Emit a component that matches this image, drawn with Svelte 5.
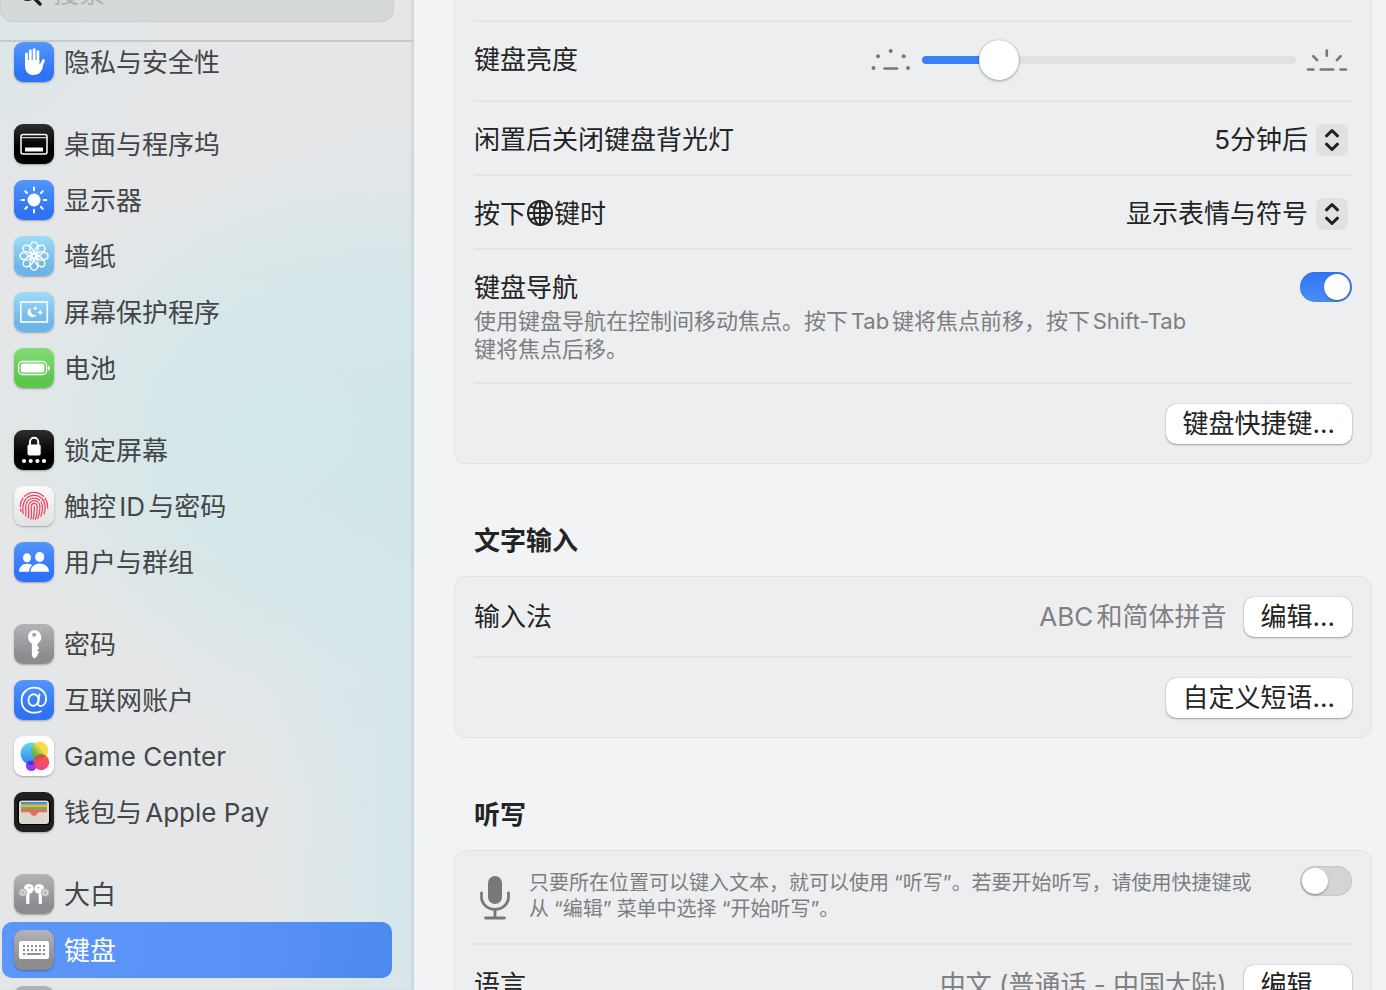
<script>
  const groups = [
    [{ icon: 'hand', tone: 'blue', label: '隐私与安全性' }],
    [
      { icon: 'dock', tone: 'black', label: '桌面与程序坞' },
      { icon: 'sun', tone: 'blue', label: '显示器' },
      { icon: 'flower', tone: 'sky', label: '墙纸' },
      { icon: 'saver', tone: 'sky', label: '屏幕保护程序' },
      { icon: 'battery', tone: 'green', label: '电池' }
    ],
    [
      { icon: 'lock', tone: 'black', label: '锁定屏幕' },
      { icon: 'touch', tone: 'light', label: '触控ID与密码' },
      { icon: 'users', tone: 'blue', label: '用户与群组' }
    ],
    [
      { icon: 'key', tone: 'gray', label: '密码' },
      { icon: 'at', tone: 'blue', label: '互联网账户' },
      { icon: 'game', tone: 'white', label: 'Game Center' },
      { icon: 'wallet', tone: 'dark', label: '钱包与Apple Pay' }
    ],
    [
      { icon: 'pods', tone: 'gray', label: '大白' },
      { icon: 'keyboard', tone: 'gray', label: '键盘', current: true },
      { icon: 'mouse', tone: 'gray', label: '' }
    ]
  ];

  const petals = [0, 45, 90, 135, 180, 225, 270, 315];
  const keyColumns = [0, 1, 2, 3, 4, 5];

  let query = $state('');
  let brightness = $state(17);
  let navigation = $state(true);
  let dictation = $state(false);
</script>

{#snippet glyph(name)}
  <svg viewBox="0 0 40 40" width="40" height="40" aria-hidden="true">
    {#if name === 'hand'}
      <g stroke="#fff" stroke-linecap="round" fill="none">
        <path d="M12.500 12v11M16.300 8.800V20M20.100 7.600V20M23.900 9.600V21" stroke-width="2.800" />
        <path d="M29.400 18.600L26 26" stroke-width="3" />
      </g>
      <path fill="#fff" d="M11.100 18h14.200v4.800l1.200-1.400 2.600 3.200C27.600 30 25 33 20 33c-5.600 0-8.900-3.400-8.900-8.800z" />
    {:else if name === 'dock'}
      <rect x="7" y="10.500" width="26" height="19.500" rx="2" fill="none" stroke="#fff" stroke-width="1.500" />
      <path d="M7.500 13.700h25" stroke="#fff" stroke-width="1" />
      <rect x="11" y="23.500" width="18" height="4" rx=".6" fill="#fff" />
    {:else if name === 'sun'}
      <circle cx="20" cy="20" r="6.500" fill="#fff" />
      <g stroke="#fff" stroke-width="2" stroke-linecap="round">
        {#each petals as a}
          <path d="M20 7.600v2.600" transform="rotate({a} 20 20)" />
        {/each}
      </g>
    {:else if name === 'flower'}
      <g fill="none" stroke="#fff" stroke-width="1.400">
        {#each petals as a}
          <ellipse cx="20" cy="12" rx="4.100" ry="6.100" transform="rotate({a} 20 20)" />
        {/each}
      </g>
    {:else if name === 'saver'}
      <rect x="6.800" y="10" width="26.500" height="20" fill="none" stroke="#fff" stroke-width="1.600" />
      <path fill="#fff" d="M16.800 15.800a4.900 4.900 0 1 0 5.800 7.100c-4.200 1.200-7.300-3.100-5.800-7.100z" />
      <path fill="#fff" d="M21.300 13.600l.7 1.900 1.900.7-1.900.7-.7 1.900-.7-1.900-1.900-.7 1.900-.7zM26.200 17.300l.9 2.200 2.200.9-2.200.9-.9 2.200-.9-2.200-2.200-.9 2.200-.9z" />
    {:else if name === 'battery'}
      <rect x="4.600" y="13.500" width="28" height="13" rx="4" fill="none" stroke="#fff" stroke-width="1.300" />
      <rect x="6.800" y="15.600" width="23.600" height="8.800" rx="2.200" fill="#fff" />
      <path d="M34 17.500c2.600.6 2.600 4.400 0 5z" fill="#fff" />
    {:else if name === 'lock'}
      <rect x="13.500" y="14.500" width="13.200" height="11" rx="1.800" fill="#fff" />
      <path d="M16 15v-3.200a4.100 4.100 0 0 1 8.200 0V15" fill="none" stroke="#fff" stroke-width="2" />
      <g fill="#fff"><circle cx="10" cy="31" r="2.100" /><circle cx="16.700" cy="31" r="2.100" /><circle cx="23.400" cy="31" r="2.100" /><circle cx="30" cy="31" r="2.100" /></g>
    {:else if name === 'touch'}
      <g fill="none" stroke="#e8475f" stroke-width="1.250" stroke-linecap="round">
        <path d="M10.500 10.300C16 4.900 24 4.900 29.500 10.300" />
        <path d="M6.300 20.500C6.300 17 7.300 14.300 9 12.200M31 12.200c2 2.600 2.900 5.600 2.600 10M7.200 25.300l-.6-2.300" />
        <path d="M9.200 27.700c-.2-2.300-.5-4.300-.3-6.700C9.500 13.500 14 9.300 20 9.300c6.500 0 10.900 4.800 11.100 11 .1 2.700-.3 5.200-.8 7.500" />
        <path d="M11.700 30c.5-3 .1-5.500-.1-8.400C11.500 15.700 15.500 12 20 12c2.300 0 4.300.8 5.800 2.300M27.100 16c1.700 3.400 1.700 9-.2 14.400" />
        <path d="M14.200 32c.9-3.700.5-6.900.2-10.400-.2-4.200 2.600-6.900 5.700-6.900 3.600 0 5.800 2.900 5.800 6.700 0 3.900-.6 7.400-2 11" />
        <path d="M16.900 33c1-4.400.5-8.500.3-11.600-.1-2.400 1.200-4 3-4 2 0 3 1.700 3 4.200 0 4-.4 8-1.700 11.700" />
        <path d="M20.200 20.300c.2 4.400 0 8.300-.9 12.700" />
      </g>
    {:else if name === 'users'}
      <g fill="#fff">
        <ellipse cx="13" cy="15.800" rx="4" ry="4.500" />
        <path d="M5 29.800c0-4.500 3.300-8 8.200-8 2 0 3.700.5 5 1.500-2 1.700-3 3.800-3.200 6.500z" />
        <ellipse cx="25.700" cy="15" rx="4.600" ry="5.100" />
        <path d="M16.500 29.800c0-4.700 3.800-8.300 9.200-8.300 5.500 0 9.300 3.600 9.300 8.300z" />
      </g>
    {:else if name === 'key'}
      <path fill="#fff" fill-rule="evenodd" d="M20.200 6a7.200 7.200 0 0 1 3.300 13.500v2.600l1.800 1.900-2 2.200 2 2.200-2 2 .4 1.300-3.500 2.700-2.300-2.500V19.500A7.200 7.200 0 0 1 20.200 6zm0 2.700a2.100 2.100 0 1 0 0 4.200 2.100 2.100 0 0 0 0-4.200z" />
    {:else if name === 'at'}
      <g fill="none" stroke="#fff" stroke-width="1.800" stroke-linecap="round">
        <ellipse cx="19.500" cy="20" rx="5" ry="5.800" transform="rotate(12 19.500 20)" />
        <path d="M25.400 14.500l-1.200 8.300c-.3 2 .7 3.300 2.500 3.300 3 0 5.400-3 5.400-7.200C32.100 12.300 27 7.700 20.400 7.700 13 7.700 7.600 13 7.600 20.300c0 7.500 5.100 12.400 12.700 12.400 2.700 0 5-.5 6.700-1.400" />
      </g>
    {:else if name === 'game'}
      <defs>
        <linearGradient id="bubble-blue" x1="0" y1="0" x2="0" y2="1"><stop offset="0" stop-color="#5fdcf5" /><stop offset="1" stop-color="#2f7df0" /></linearGradient>
        <linearGradient id="bubble-yellow" x1=".9" y1=".1" x2="0" y2="1"><stop offset=".35" stop-color="#f8dc3c" /><stop offset=".6" stop-color="#86bd4c" /><stop offset="1" stop-color="#3f9f50" /></linearGradient>
        <linearGradient id="bubble-red" x1="0" y1="0" x2="0" y2="1"><stop offset="0" stop-color="#f0553f" /><stop offset="1" stop-color="#f5307c" /></linearGradient>
      </defs>
      <circle cx="17.300" cy="29.600" r="5.400" fill="#8a3df5" />
      <circle cx="17.800" cy="17.600" r="11.200" fill="url(#bubble-blue)" />
      <path d="M12.500 27.500a11.200 11.200 0 0 0 9.600.5 5.400 5.400 0 0 0-9.600-.5z" fill="#3c33e0" />
      <ellipse cx="25.700" cy="14.600" rx="8.700" ry="9" fill="url(#bubble-yellow)" opacity=".94" />
      <circle cx="27.200" cy="26.200" r="8" fill="url(#bubble-red)" opacity=".94" />
      <path d="M20 22.900a8 8 0 0 1 11-3.700 9 9 0 0 1-11 3.700z" fill="#c8553a" opacity=".8" />
    {:else if name === 'wallet'}
      <rect x="3.500" y="7.500" width="33" height="25.500" rx="4" fill="#000" />
      <rect x="5" y="8.500" width="30" height="23.500" rx="3" fill="#dbd8cf" />
      <path d="M7 10h26v3H7z" fill="#4b93c9" />
      <path d="M7 12.500h26v3H7z" fill="#f0b23e" />
      <path d="M7 15h26v3H7z" fill="#68b356" />
      <path d="M7 17.300h26v2.900h-7.800c-1.500 0-1.500 1-2.200 2-1.500 2-4.500 2-6 0-.7-1-.7-2-2.200-2H7z" fill="#e66f5c" />
    {:else if name === 'pods'}
      <g fill="#fff">
        <circle cx="14.800" cy="14.800" r="4.900" /><circle cx="25.200" cy="14.800" r="4.900" />
        <rect x="12.200" y="17" width="3.200" height="13" rx=".8" /><rect x="24.700" y="17" width="3.200" height="13" rx=".8" />
      </g>
      <g fill="#d0d0d3" stroke="#98989d" stroke-width=".6">
        <circle cx="8.800" cy="18.500" r="4" /><circle cx="31.200" cy="18.500" r="4" />
      </g>
      <path d="M15 14.300l1.300-1.200M25 14.300l-1.300-1.200M8.200 19.200l1.200-1.200M31.800 19.200l-1.200-1.200" stroke="#929297" stroke-width="1.200" />
    {:else if name === 'keyboard'}
      <rect x="5" y="11" width="30" height="18" rx="2.600" fill="#fff" />
      <g fill="#929297">
        {#each keyColumns as c}
          <rect x={9 + c * 4} y="15" width="2" height="2.200" />
          <rect x={9 + c * 4} y="19" width="2" height="2.200" />
        {/each}
        <rect x="9" y="23" width="2.500" height="2" /><rect x="13" y="23" width="14" height="2" /><rect x="28.500" y="23" width="2.500" height="2" />
      </g>
    {:else}
      <rect x="13" y="7" width="14" height="26" rx="7" fill="#fff" />
    {/if}
  </svg>
{/snippet}

{#snippet chevrons()}
  <svg class="chevrons" viewBox="0 0 32 32" width="32" height="32" aria-hidden="true">
    <path d="M10.500 11.800L16 6.500l5.500 5.300M10.500 20.200L16 25.500l5.500-5.300" fill="none" stroke="#1f2022" stroke-width="3" stroke-linecap="round" stroke-linejoin="round" />
  </svg>
{/snippet}

<div class="window">
  <aside>
    <div class="search">
      <svg viewBox="0 0 26 26" width="26" height="26" aria-hidden="true">
        <circle cx="10.500" cy="10.500" r="8" fill="none" stroke="#1d1e20" stroke-width="3" />
        <path d="M16.500 16.500l6.500 6.500" stroke="#1d1e20" stroke-width="3.400" stroke-linecap="round" />
      </svg>
      <input type="search" placeholder="搜索" aria-label="搜索" bind:value={query} />
    </div>
    <nav>
      {#each groups as group}
        <ul>
          {#each group as item}
            <li>
              <a href="#{item.icon}" class:current={item.current} aria-current={item.current ? 'page' : undefined}>
                <span class="tile {item.tone}">{@render glyph(item.icon)}</span>
                <span class="label">{item.label}</span>
              </a>
            </li>
          {/each}
        </ul>
      {/each}
    </nav>
  </aside>

  <main>
    <section class="card continued">
      <div class="row previous"></div>
      <div class="row slider-row">
        <label for="brightness">键盘亮度</label>
        <div class="slider">
          <svg viewBox="0 0 42 24" width="42" height="24" aria-hidden="true">
            <g fill="#77787a"><circle cx="3.500" cy="20" r="2" /><circle cx="8" cy="8.300" r="2" /><circle cx="20.700" cy="3" r="2" /><circle cx="33.700" cy="8.300" r="2" /><circle cx="38" cy="20" r="2" /></g>
            <path d="M14.500 20.500h12.500" stroke="#77787a" stroke-width="2.600" stroke-linecap="round" />
          </svg>
          <input id="brightness" type="range" min="0" max="100" bind:value={brightness} style="--fill: {brightness}%" />
          <svg viewBox="0 0 42 24" width="42" height="24" aria-hidden="true">
            <path d="M2 21.500h5.500M14.700 21.500h12.500M34.500 21.500H40M20.800 2.500v5.300M7.300 8.200l3.800 4M34.700 8.200l-3.800 4" stroke="#77787a" stroke-width="2.600" stroke-linecap="round" />
          </svg>
        </div>
      </div>
      <div class="row popup-row">
        <label for="backlight">闲置后关闭键盘背光灯</label>
        <div class="popup">
          <select id="backlight"><option>5分钟后</option></select>
          {@render chevrons()}
        </div>
      </div>
      <div class="row popup-row">
        <label for="globe-key">按下<svg class="globe" viewBox="0 0 28 28" width="28" height="28" role="img" aria-label="地球仪"><g fill="none" stroke="#232425" stroke-width="2"><circle cx="14" cy="14" r="12" /><ellipse cx="14" cy="14" rx="6" ry="12" /><path d="M14 2v24M2 14h24M4.500 7.500c5.500 2.700 13.500 2.700 19 0M4.500 20.500c5.500-2.700 13.500-2.700 19 0" /></g></svg>键时</label>
        <div class="popup">
          <select id="globe-key"><option>显示表情与符号</option></select>
          {@render chevrons()}
        </div>
      </div>
      <div class="row nav-row">
        <div>
          <label for="navigation">键盘导航</label>
          <p class="hint">使用键盘导航在控制间移动焦点。按下Tab键将焦点前移，按下Shift-Tab<br />键将焦点后移。</p>
        </div>
        <input id="navigation" class="switch" type="checkbox" role="switch" bind:checked={navigation} />
      </div>
      <div class="row action-row"><button type="button">键盘快捷键…</button></div>
    </section>

    <h2>文字输入</h2>
    <section class="card">
      <div class="row action-row">
        <span class="name">输入法</span>
        <span class="value">ABC和简体拼音</span>
        <button type="button">编辑…</button>
      </div>
      <div class="row action-row"><button type="button">自定义短语…</button></div>
    </section>

    <h2>听写</h2>
    <section class="card">
      <div class="row dictation-row">
        <svg class="mic" viewBox="0 0 32 46" width="32" height="46" aria-hidden="true">
          <rect x="9" y="1" width="14" height="28" rx="7" fill="#77787a" />
          <path d="M2.500 18v4a13.500 12.500 0 0 0 27 0v-4M16 35v7.500M6.500 43h19" fill="none" stroke="#77787a" stroke-width="2.800" stroke-linecap="round" />
        </svg>
        <label class="dictation" for="dictation">只要所在位置可以键入文本，就可以使用<span class="term">“听写”</span>。若要开始听写，请使用快捷键或<br />从<span class="term spaced">“编辑”</span>菜单中选择<span class="term">“开始听写”</span>。</label>
        <input id="dictation" class="switch" type="checkbox" role="switch" bind:checked={dictation} />
      </div>
      <div class="row action-row">
        <span class="name">语言</span>
        <span class="value">中文 (普通话 - 中国大陆)</span>
        <button type="button">编辑…</button>
      </div>
    </section>
  </main>
</div>

<style>
  :global(body) {
    margin: 0;
    background: #f2f3f5;
  }
  .window {
    display: flex;
    height: 100vh;
    overflow: hidden;
    font-family: Inter, 'Noto Sans CJK SC', sans-serif;
    font-size: 26px;
    line-height: 32px;
    color: #232425;
    text-autospace: normal;
  }
  ul, p, h2 {
    margin: 0;
    padding: 0;
  }
  svg {
    display: block;
    flex: none;
  }

  aside {
    box-sizing: border-box;
    flex: none;
    width: 414px;
    display: flex;
    flex-direction: column;
    border-right: 1px solid #cbd3d5;
    box-shadow: inset -2px 0 2px #0000000d;
    background:
      radial-gradient(ellipse 170px 420px at 104% 88%, #d3e6eb, #d3e6eb00),
      radial-gradient(ellipse 300px 260px at 64% 43%, #d1e7e9, #d1e7e900),
      radial-gradient(ellipse 360px 380px at 108% 47%, #d3e6ea 25%, #d3e6ea00),
      radial-gradient(ellipse 200px 200px at 0 4%, #dce6e8, #dce6e800),
      linear-gradient(#e6e6e8, #e4e6e7);
  }
  .search {
    display: flex;
    align-items: center;
    gap: 10px;
    box-sizing: border-box;
    flex: none;
    height: 56px;
    margin: -34px 19px 18px 0;
    padding: 0 16px;
    border: 1px solid #c9cdce;
    border-radius: 12px;
    background: #d6d9da;
  }
  .search input {
    flex: 1;
    min-width: 0;
    padding: 0;
    border: 0;
    outline: 0;
    background: none;
    font: inherit;
    color: inherit;
  }
  .search input::placeholder {
    color: #adb0b2;
  }
  nav {
    flex: 1;
    min-height: 0;
    overflow: hidden;
    border-top: 2px solid #c6cbcd;
    padding: 0 21px 0 2px;
  }
  nav ul {
    list-style: none;
    margin-bottom: 26px;
  }
  nav ul:first-child {
    margin-top: -8px;
  }
  a {
    display: flex;
    align-items: center;
    gap: 10px;
    height: 56px;
    padding-left: 12px;
    border-radius: 10px;
    color: #434648;
    text-decoration: none;
  }
  a.current {
    background: linear-gradient(100deg, #5d96f9, #5892f6 60%, #4e89ef);
    color: #fff;
  }
  .label {
    padding-top: 2px;
  }
  .tile {
    flex: none;
    width: 40px;
    height: 40px;
    border-radius: 9px;
    box-shadow: 0 1px 2px #0000004d;
  }
  .blue { background: linear-gradient(#5396fa, #2f72f6 80%); }
  .black { background: linear-gradient(#2e2e2e, #000 60%); }
  .sky { background: linear-gradient(#9fdcf8, #6cb5e8 80%); }
  .green { background: linear-gradient(#83dc76, #5cc64d 80%); }
  .light { background: linear-gradient(#fafafa, #e2e2e3); }
  .gray { background: linear-gradient(#b4b4b8, #8b8b90 80%); }
  .white { background: #fff; }
  .dark { background: #202021; }

  main {
    flex: 1;
    min-width: 0;
    padding: 0 14px 0 40px;
  }
  h2 {
    padding: 60px 20px 18px;
    font-size: 26px;
    line-height: 34px;
    font-weight: 700;
  }
  .card {
    padding: 0 19px;
    border: 1px solid #e1e2e4;
    border-radius: 12px;
    background: #edeef0;
  }
  .continued {
    border-top: 0;
    border-radius: 0 0 12px 12px;
  }
  .row {
    display: flex;
    align-items: center;
    justify-content: space-between;
    border-bottom: 2px solid #e2e3e5;
  }
  .row:last-child {
    border-bottom: 0;
  }
  .previous {
    height: 20px;
  }
  .slider-row {
    min-height: 76px;
    padding: 0 4px 2px 0;
  }
  .slider {
    display: flex;
    align-items: center;
    gap: 10px;
    width: 55%;
    max-width: 478px;
  }
  input[type='range'] {
    appearance: none;
    flex: 1;
    min-width: 0;
    height: 40px;
    margin: 0;
    background: none;
  }
  input[type='range']::-webkit-slider-runnable-track {
    height: 8px;
    border-radius: 4px;
    background: linear-gradient(90deg, #3b80f7 calc(var(--fill) + 2%), #e0e1e3 0);
  }
  input[type='range']::-webkit-slider-thumb {
    appearance: none;
    width: 40px;
    height: 40px;
    margin-top: -16px;
    border-radius: 50%;
    background: #fff;
    box-shadow: 0 0 1px #00000066, 0 1px 3px #0000004d;
  }
  .popup-row {
    min-height: 69px;
    padding: 3px 4px 0 0;
  }
  .popup {
    position: relative;
  }
  select {
    appearance: none;
    display: block;
    height: 36px;
    padding: 0 40px 0 0;
    border: 0;
    background: none;
    font: inherit;
    color: inherit;
    text-align: right;
    text-autospace: inherit;
  }
  .chevrons {
    position: absolute;
    right: 0;
    top: 2px;
    border-radius: 8px;
    background: #e0e1e3;
    pointer-events: none;
  }
  .globe {
    display: inline-block;
    vertical-align: -4px;
  }
  .nav-row {
    align-items: flex-start;
    padding: 22px 0 19px;
  }
  .nav-row label {
    display: block;
    margin-bottom: 3px;
  }
  .hint {
    font-size: 22px;
    line-height: 28px;
    color: #7d7e80;
  }
  .switch {
    appearance: none;
    box-sizing: border-box;
    flex: none;
    width: 52px;
    height: 30px;
    margin: 0;
    padding: 2px;
    border-radius: 15px;
    background: #d3d4d6;
    box-shadow: inset 0 0 2px #00000033;
  }
  .switch::before {
    content: '';
    display: block;
    width: 26px;
    height: 26px;
    border-radius: 50%;
    background: #fff;
    box-shadow: 0 1px 2px #00000059;
  }
  .switch:checked {
    background: linear-gradient(#3273f2, #4a8ff8);
  }
  .switch:checked::before {
    margin-left: auto;
  }
  .action-row {
    min-height: 79px;
    gap: 17px;
    justify-content: flex-end;
  }
  .name {
    margin-right: auto;
  }
  .value {
    color: #7f8082;
  }
  button {
    height: 40px;
    padding: 0 17px;
    border: 0;
    border-radius: 10px;
    background: #fff;
    box-shadow: 0 0 1px #00000066, 0 1px 2px #0000004d;
    font: inherit;
    color: inherit;
    text-autospace: inherit;
  }
  .dictation-row {
    align-items: flex-start;
    padding: 15px 0 17px;
  }
  .mic {
    margin: 9px 18px 0 5px;
  }
  .dictation {
    flex: 1;
    margin: 4px 0;
    font-size: 20px;
    line-height: 26px;
    color: #7d7e80;
  }
  .term {
    margin-left: 5px;
  }
  .spaced {
    margin-right: 5px;
  }
</style>
